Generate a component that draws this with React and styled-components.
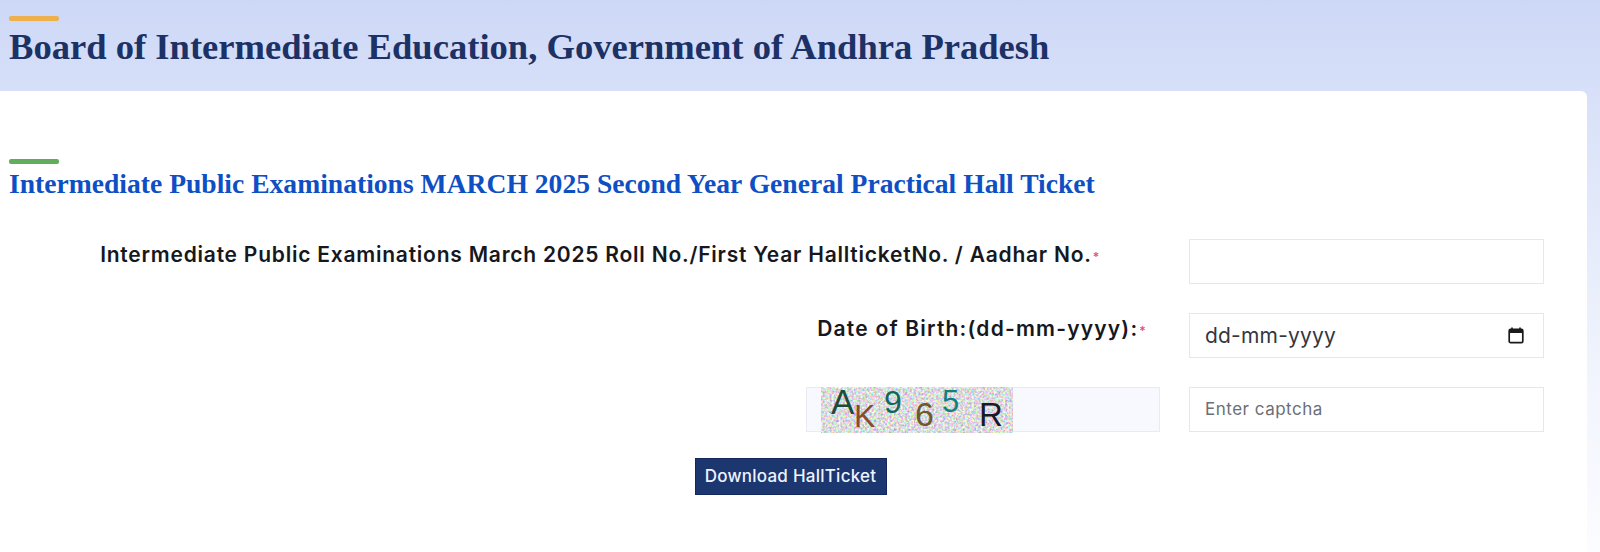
import styled, { createGlobalStyle } from "styled-components";

const GlobalStyle = createGlobalStyle`
  html, body {
    margin: 0;
    padding: 0;
    height: 100%;
    overflow: hidden;
    background: #ffffff;
  }
  body {
    font-family: "Inter", "Liberation Sans", sans-serif;
  }
`;

const Page = styled.div`
  height: 552px;
  background: linear-gradient(180deg, #cdd8f7 0%, #dce4f9 25%, #f2f5fd 70%, #fbfcff 100%);
  display: flex;
  flex-direction: column;
`;

const Header = styled.header`
  height: 91px;
  box-sizing: border-box;
  padding: 16px 0 0 9px;
`;

const Accent = styled.div`
  width: 50px;
  height: 5px;
  border-radius: 2px;
  background: ${(p) => p.$color};
`;

const Title = styled.h1`
  margin: 3px 0 0;
  font-family: "Liberation Serif", serif;
  font-size: 36.6px;
  line-height: 46px;
  font-weight: 700;
  color: #1c3166;
  white-space: nowrap;
`;

const Card = styled.main`
  flex: 1;
  width: 1587px;
  box-sizing: border-box;
  background: #ffffff;
  border-radius: 0 6px 0 0;
  padding: 68px 43px 0 9px;
`;

const SubTitle = styled.h2`
  margin: 3px 0 0;
  font-family: "Liberation Serif", serif;
  font-size: 27.6px;
  line-height: 34px;
  font-weight: 700;
  color: #0f4fc4;
  white-space: nowrap;
`;

const Form = styled.form`
  margin-top: 37.5px;
  display: flex;
  flex-direction: column;
`;

const Row = styled.div`
  display: grid;
  grid-template-columns: 1fr 355px;
  column-gap: 29px;
  margin-bottom: 28.5px;
`;

const Label = styled.label`
  justify-self: end;
  margin-right: ${(p) => p.$inset}px;
  padding-top: 3px;
  font-size: 21px;
  line-height: 26px;
  font-weight: 600;
  letter-spacing: ${(p) => p.$track}px;
  color: #16181d;
  white-space: nowrap;
`;

const Required = styled.span`
  color: #e0566f;
  font-size: 12px;
  vertical-align: 1px;
  margin-left: 1px;
`;

const Input = styled.input`
  width: 100%;
  height: 45.5px;
  box-sizing: border-box;
  border: 1px solid #e5e7ec;
  background: #ffffff;
  padding: 0 15px;
  font-family: "Inter", sans-serif;
  font-size: 17px;
  letter-spacing: 0.5px;
  outline: none;
  &::placeholder {
    color: #6b6f76;
    opacity: 1;
  }
`;

const DateField = styled.div`
  height: 45.5px;
  box-sizing: border-box;
  border: 1px solid #e5e7ec;
  padding: 0 19px 0 15px;
  display: flex;
  align-items: center;
  justify-content: space-between;
  font-size: 21px;
  letter-spacing: 0.2px;
  color: #34373c;
`;

const CaptchaBox = styled.div`
  width: 354px;
  justify-self: end;
  height: 45.5px;
  box-sizing: border-box;
  border: 1px solid #e9ebf1;
  background: #f8f9fe;
  padding-left: 14px;
  display: flex;
`;

const CaptchaImage = styled.div`
  position: relative;
  width: 192px;
  height: 46px;
  margin-top: -1px;
  background: #e6e4e6;
`;

const CaptchaNoise = styled.svg`
  position: absolute;
  inset: 0;
  width: 100%;
  height: 100%;
`;

const CaptchaChar = styled.span`
  position: absolute;
  left: ${(p) => p.$x}px;
  top: ${(p) => p.$y}px;
  font-family: "Liberation Sans", sans-serif;
  font-size: ${(p) => p.$size}px;
  line-height: 1;
  color: ${(p) => p.$color};
`;

const Actions = styled.div`
  display: flex;
  justify-content: center;
  margin-top: -3px;
  padding-left: 28px;
`;

const Button = styled.button`
  width: 192px;
  height: 37px;
  border: 1px solid #14275c;
  border-radius: 0;
  background: #1c3670;
  color: #eef3ff;
  font-family: "Inter", sans-serif;
  font-size: 17px;
  font-weight: 500;
  letter-spacing: 0.25px;
  padding: 0;
`;

const chars = [
  { c: "A", x: 10, y: -3, size: 35, color: "#1f4a3a" },
  { c: "K", x: 33, y: 13, size: 32, color: "#8a4a2e" },
  { c: "9", x: 63, y: -1, size: 32, color: "#14665a" },
  { c: "6", x: 94, y: 10, size: 34, color: "#6b5a2c" },
  { c: "5", x: 121, y: -1, size: 31, color: "#14807c" },
  { c: "R", x: 158, y: 11, size: 33, color: "#1a1a26" },
];

const CalendarIcon = () => (
  <svg width="16" height="17" viewBox="0 0 16 17" fill="none">
    <path d="M4 0.5v3M12 0.5v3" stroke="#1a1a1a" strokeWidth="1.6" />
    <rect x="1.2" y="2.4" width="13.6" height="13.2" rx="1.4" stroke="#1a1a1a" strokeWidth="1.7" />
    <rect x="1.2" y="2.4" width="13.6" height="3.6" fill="#1a1a1a" />
  </svg>
);

export default function App() {
  return (
    <Page>
      <GlobalStyle />
      <Header>
        <Accent $color="#eeb04d" />
        <Title>Board of Intermediate Education, Government of Andhra Pradesh</Title>
      </Header>
      <Card>
        <Accent $color="#62ad5c" />
        <SubTitle>Intermediate Public Examinations MARCH 2025 Second Year General Practical Hall Ticket</SubTitle>
        <Form onSubmit={(e) => e.preventDefault()}>
          <Row>
            <Label $inset={60} $track={0.77}>
              Intermediate Public Examinations March 2025 Roll No./First Year HallticketNo. / Aadhar No.
              <Required>*</Required>
            </Label>
            <Input type="text" />
          </Row>
          <Row>
            <Label $inset={13} $track={1.2}>
              Date of Birth:(dd-mm-yyyy):<Required>*</Required>
            </Label>
            <DateField>
              dd-mm-yyyy
              <CalendarIcon />
            </DateField>
          </Row>
          <Row>
            <CaptchaBox>
              <CaptchaImage>
                <CaptchaNoise>
                  <filter id="noise" colorInterpolationFilters="sRGB">
                    <feTurbulence type="fractalNoise" baseFrequency="0.45" numOctaves="2" seed="7" />
                    <feColorMatrix
                      type="matrix"
                      values="0.8 0 0 0 0.46  0 0.8 0 0 0.46  0 0 0.8 0 0.47  0 0 0 0 1"
                    />
                    <feGaussianBlur stdDeviation="0.5" />
                  </filter>
                  <rect width="100%" height="100%" filter="url(#noise)" />
                </CaptchaNoise>
                {chars.map((ch) => (
                  <CaptchaChar key={ch.c} $x={ch.x} $y={ch.y} $size={ch.size} $color={ch.color}>
                    {ch.c}
                  </CaptchaChar>
                ))}
              </CaptchaImage>
            </CaptchaBox>
            <Input type="text" placeholder="Enter captcha" />
          </Row>
          <Actions>
            <Button type="submit">Download HallTicket</Button>
          </Actions>
        </Form>
      </Card>
    </Page>
  );
}
